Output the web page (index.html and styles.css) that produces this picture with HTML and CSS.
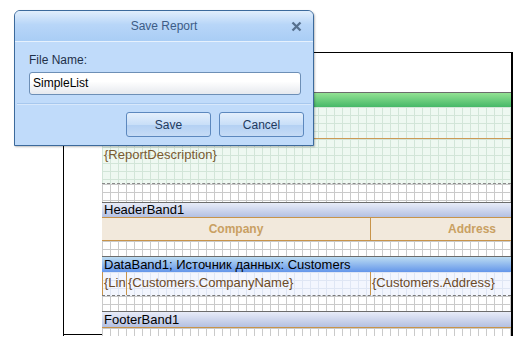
FILE: index.html
```html
<!DOCTYPE html>
<html>
<head>
  <title>Save Report</title>
  <link rel="stylesheet" href="styles.css">
</head>
<body>
  <div class="page">
    <div class="page-top"></div>
    <div class="page-body">
      <div class="page-margin"></div>
      <div class="content">
        <div class="band band-title"></div>
        <div class="title-area">
          <div class="desc-box">{ReportDescription}</div>
        </div>
        <div class="grid gap-a"></div>
        <div class="band band-header">HeaderBand1</div>
        <div class="col-header">
          <div class="col col-company">Company</div>
          <div class="col col-address">Address</div>
        </div>
        <div class="grid gap-b"></div>
        <div class="band band-data">DataBand1; Источник данных: Customers</div>
        <div class="data-row">
          <div class="cell cell-line">{Lin</div>
          <div class="cell cell-company">{Customers.CompanyName}</div>
          <div class="cell cell-address">{Customers.Address}</div>
        </div>
        <div class="grid gap-b"></div>
        <div class="band band-footer">FooterBand1</div>
        <div class="grid gap-c"></div>
      </div>
    </div>
  </div>

  <div class="dialog">
    <div class="dialog-title">
      <span>Save Report</span>
      <svg class="close" width="11" height="11" viewBox="0 0 11 11">
        <path d="M1.5 1.5 L9.5 9.5 M9.5 1.5 L1.5 9.5" stroke="#56708e" stroke-width="2.3" fill="none"/>
      </svg>
    </div>
    <div class="dialog-body">
      <label class="field-label">File Name:</label>
      <div class="field">SimpleList</div>
    </div>
    <div class="dialog-buttons">
      <button class="btn">Save</button>
      <button class="btn">Cancel</button>
    </div>
  </div>
</body>
</html>
```

FILE: styles.css
```css
body {
  margin: 0;
  width: 518px;
  height: 341px;
  overflow: hidden;
  background: #ffffff;
  font-family: "Liberation Sans", Arial, sans-serif;
  font-size: 12px;
}

.page {
  box-sizing: border-box;
  margin: 52px 0 0 63px;
  width: 450px;
  height: 284px;
  border: 1px solid #000;
  border-right-width: 2px;
  border-bottom: none;
  display: flex;
  flex-direction: column;
}

.page-top {
  height: 39px;
  flex: none;
}

.page-body {
  display: flex;
  flex: 1;
}

.page-margin {
  width: 38px;
  height: 242px;
  border-bottom: 1px solid #000;
  flex: none;
}

.content {
  flex: 1;
  display: flex;
  flex-direction: column;
  overflow: hidden;
  font-size: 13px;
}

.grid {
  background-color: #ffffff;
  background-image:
    linear-gradient(to right, #cacaca 1px, transparent 1px),
    linear-gradient(to bottom, #cacaca 1px, transparent 1px);
  background-size: 8px 8px;
  background-position: 0 0;
}

.band {
  box-sizing: border-box;
  height: 15px;
  border-top: 1px solid #6c6c6c;
  padding-left: 2px;
  line-height: 14px;
  color: #000;
  white-space: nowrap;
  flex: none;
}

.band-title {
  background: linear-gradient(to bottom, #93e293, #46b868);
}

.band-header {
  background: linear-gradient(to bottom, #e8ecf8, #b4c0e2);
}

.band-footer {
  height: 16px;
  line-height: 15px;
  background: linear-gradient(to bottom, #e8ecf8, #b4c0e2);
}

.band-data {
  height: 16px;
  line-height: 15px;
  background: linear-gradient(to bottom, #bcdcf2, #6496ea);
}

.title-area {
  box-sizing: border-box;
  height: 77px;
  padding-top: 31px;
  border-bottom: 1px dashed #8a8a8a;
  background-color: #eef8f1;
  background-image:
    linear-gradient(to right, #d2e5d8 1px, transparent 1px),
    linear-gradient(to bottom, #d2e5d8 1px, transparent 1px);
  background-size: 8px 8px;
  flex: none;
}

.desc-box {
  border-top: 1px solid #cc9a55;
  padding: 9px 2px 0;
  color: #7a5a30;
  line-height: 14px;
}

.gap-a {
  height: 18px;
  flex: none;
}

.gap-b {
  height: 15px;
  flex: none;
}

.gap-c {
  flex: 1;
  border-top: 1px solid #c8944a;
}

.col-header {
  box-sizing: border-box;
  height: 24px;
  display: flex;
  background: #f2e9dc;
  border-top: 1px solid #c8944a;
  border-bottom: 1px solid #c8944a;
  flex: none;
}

.col {
  font-size: 12px;
  font-weight: bold;
  color: #c9a062;
  line-height: 22px;
}

.col-company {
  box-sizing: border-box;
  width: 269px;
  text-align: center;
  border-right: 1px solid #c8944a;
}

.col-address {
  flex: 1;
  padding-left: 77px;
  white-space: nowrap;
}

.data-row {
  box-sizing: border-box;
  height: 24px;
  display: flex;
  border-bottom: 1px dashed #7a7a7a;
  background-color: #f3f6fe;
  background-image:
    linear-gradient(to right, #dfe6f4 1px, transparent 1px),
    linear-gradient(to bottom, #dfe6f4 1px, transparent 1px);
  background-size: 8px 8px;
  flex: none;
}

.cell {
  box-sizing: border-box;
  color: #6b4a26;
  line-height: 22px;
  white-space: nowrap;
  overflow: hidden;
  padding-left: 1px;
}

.cell-line {
  width: 25px;
  border-left: 1px solid #c8944a;
  border-right: 1px solid #c8944a;
}

.cell-company {
  width: 244px;
  border-right: 1px solid #c8944a;
}

.cell-address {
  flex: 1;
}

/* dialog */
.dialog {
  position: absolute;
  left: 14px;
  top: 10px;
  width: 300px;
  box-sizing: border-box;
  border: 1px solid #3c6a9c;
  border-radius: 6px 6px 0 0;
  background: #c0dbfa;
  box-shadow: 1px 1px 2px rgba(0, 0, 0, 0.25);
}

.dialog-title {
  height: 30px;
  display: flex;
  align-items: center;
  justify-content: center;
  position: relative;
  color: #3d5c86;
  font-size: 12px;
  border-radius: 5px 5px 0 0;
  background: linear-gradient(to bottom, #e1eefc, #b8d6f8 45%, #a9cdf5);
  border-bottom: 1px solid #e6f1fd;
}

.close {
  position: absolute;
  right: 11px;
  top: 10px;
}

.dialog-body {
  margin: 0 2px;
  padding: 11px 12px 8px;
  border-bottom: 1px solid #a7c8ee;
  box-shadow: 0 1px 0 #d8e8fb;
}

.field-label {
  display: block;
  color: #1f3048;
  line-height: 15px;
  margin-bottom: 4px;
}

.field {
  box-sizing: border-box;
  height: 23px;
  width: 272px;
  padding: 0 3px;
  line-height: 21px;
  color: #000;
  border: 1px solid #6d8fb6;
  border-radius: 3px;
  background: linear-gradient(to bottom, #ffffff, #ffffff 40%, #e6e9ee);
}

.dialog-buttons {
  display: flex;
  justify-content: flex-end;
  gap: 8px;
  padding: 8px 9px 8px;
}

.btn {
  width: 85px;
  height: 25px;
  font-family: "Liberation Sans", Arial, sans-serif;
  font-size: 12px;
  color: #1e3a5e;
  border: 1px solid #5c88be;
  border-radius: 3px;
  background: linear-gradient(to bottom, #e4effc, #c9dff8 50%, #b3d0f3 51%, #c6dcf6);
  padding: 0;
}
```
